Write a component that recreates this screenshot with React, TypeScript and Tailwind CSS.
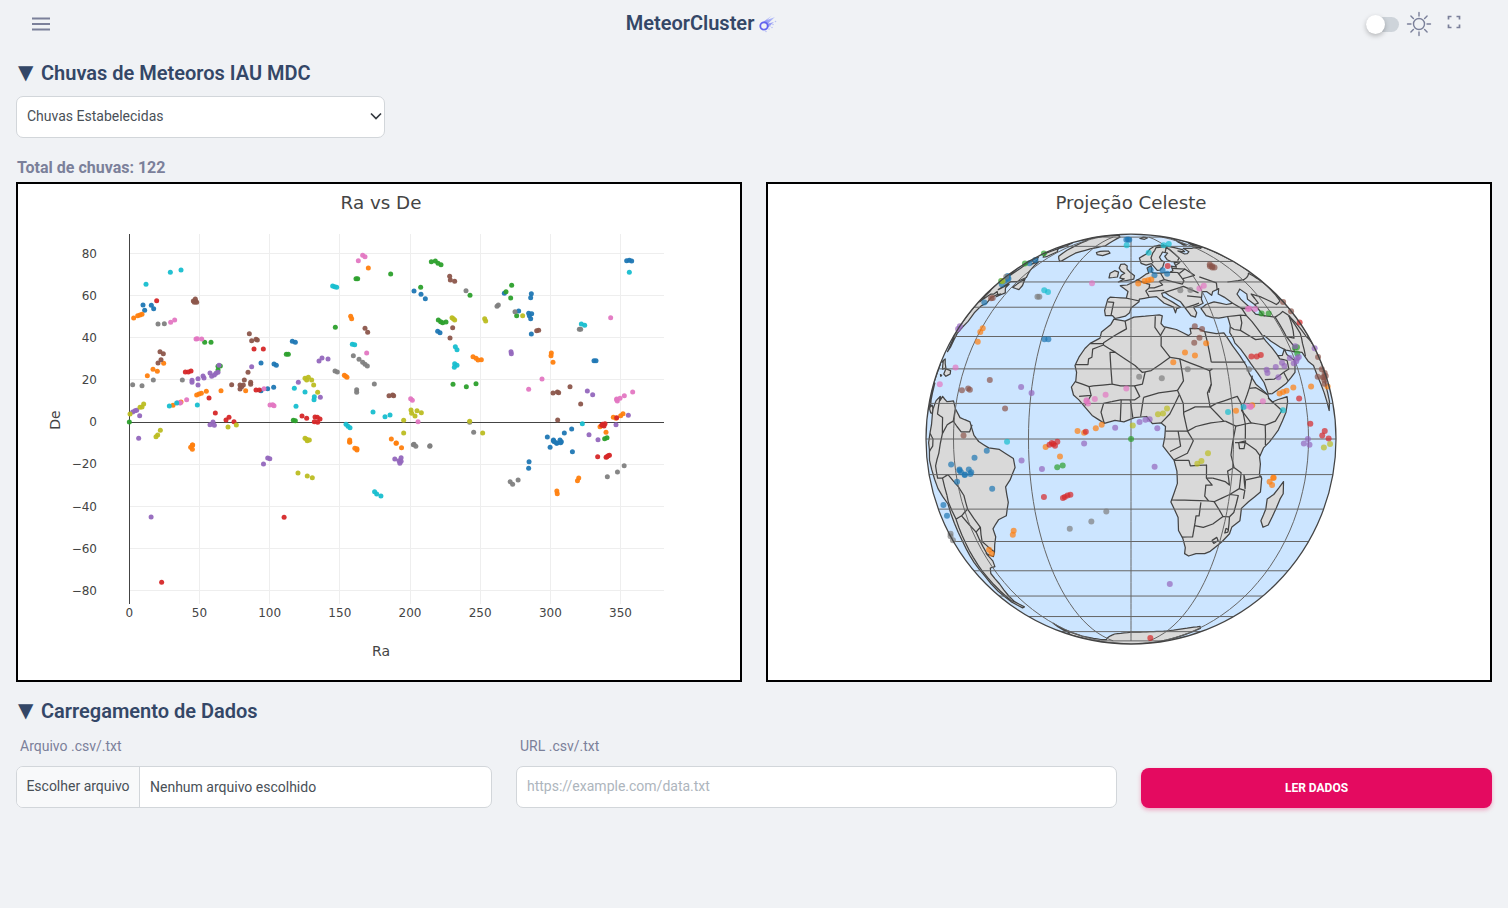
import React from "react";

const COLORS: Record<string, string> = {
  b: "#1f77b4", o: "#ff7f0e", g: "#2ca02c", r: "#d62728", p: "#9467bd",
  n: "#8c564b", k: "#e377c2", y: "#7f7f7f", l: "#bcbd22", c: "#17becf",
};

const P10: Record<string, number[]> = {
  b: [309,240,314,256,334,241,341,251,663,414,702,417,709,421,757,349,766,352,683,491,701,487,663,497],
  o: [281,279,293,272,300,270,306,268,339,433,352,439,322,452,371,415,399,541,423,531,470,510,477,507,484,505,499,499,543,497,617,497,458,660,985,129,932,274,935,281,913,451,917,454,921,457,929,645,929,652],
  g: [268,591,494,352,513,352,534,435,534,424,541,423,739,388,745,388,886,307,948,161,953,161,760,586,766,587],
  r: [350,227,436,441,445,441,453,438,507,519,526,564,558,585,567,577,582,590,642,372,670,372,648,495,658,495,786,573,800,580,825,576,832,577,840,582,823,590,833,592],
  p: [278,561,285,557,290,556,299,572,296,640,456,466,456,472,474,461,489,453,492,459,510,444,515,454,523,450,528,445,534,442,537,421,474,480,510,599,519,591,523,601,635,425,775,472,837,408,846,399,864,402,841,517],
  n: [360,380,370,386,363,404,354,414,467,228,460,228,470,232,466,222,463,232,628,326,635,347,652,345,648,343,624,442,613,465,575,479,600,480,600,492,610,480,605,485,632,472,632,478,975,310,983,322],
  k: [392,292,404,285,468,342,472,341,485,342,413,533,421,533,440,524,672,491,690,540,698,539,702,542,955,107,968,91,975,95,980,384,420,534],
  y: [278,479,306,482,340,465,354,297,373,296,427,465,885,438,892,441,940,392,957,403,968,412,975,418,982,423,950,494,950,502],
  l: [270,567,300,547,306,546,311,537,361,616,353,630,348,635,564,606,589,600,795,460,805,457,800,465,815,465,821,480,833,502,795,640,800,643,808,645],
  c: [318,178,391,142,423,135,388,543,410,534,472,540,763,490,795,501,768,544,823,515,822,524,878,183,884,185,890,187,937,358,944,359,918,598,924,604,930,608],
};
const P11: Record<string, number[]> = {
  b: [132,198,153,208,166,221,203,319,210,323,403,205,446,258,484,206,482,218,476,265,485,266,478,272,482,281,484,327,770,107,778,106,785,108,672,407,678,407,532,636,550,647,560,655,570,645,574,650,583,624,605,612],
  o: [309,395,318,400,324,405,334,404,544,384,543,392,549,412,64,642,79,654,690,605,708,622,730,577,738,580,752,572,759,566],
  g: [184,110,196,108,204,115,213,119,62,147,152,187,300,211,205,285,212,290,218,293,228,291,408,200,425,181,422,219,440,272,249,478,289,485,318,476,704,641,711,638],
  r: [740,578,695,601,700,600,705,596,702,603,698,598],
  p: [423,380,424,386,652,498,668,509,775,571,738,599,657,629,684,644],
  n: [239,154,241,165,254,169,248,308,240,339,57,512,68,510,71,512,500,317,506,316,549,504,562,501,566,503,600,485,632,537,563,585],
  k: [122,521,127,526,144,590,722,278,476,493,516,462,740,524,742,528,750,520,763,512,788,501,740,522],
  y: [13,477,288,197,381,244,385,240,435,260,628,313,632,313,299,592,311,622,132,658,180,662],
  l: [246,278,250,281,254,285,344,281,347,288,458,272,123,555,125,565,135,573,141,557,154,563,101,586,101,624,338,624,299,589],
  c: [9,561,45,575,60,570,256,365,261,374,254,416,261,421,253,427,634,297,644,301,778,142,637,596],
};
const P12: Record<string, number[]> = {
  o: [362,15,358,22,362,28,736,5,748,25,753,30,753,26,846,10,859,23,1280,114,1277,122,1228,153,1229,161],
  p: [264,231,531,72,541,54,546,56,843,57,858,53,853,62,858,64,855,70],
  l: [613,99,635,108,647,113,635,2],
  r: [289,427,580,232,1325,50,1345,52,1350,47,1353,46,1347,50],
  c: [795,155,800,162,810,168],
  y: [887,14,893,19,926,19,1117,125,1123,133,1136,120,1348,110,1372,96,1388,77],
  b: [1162,65,1161,85,1212,22,1265,35,1222,5,1228,9,1237,8,1220,0],
};

type Dot = { x: number; y: number; c: string };
const DOTS: Dot[] = [];
const add = (set: Record<string, number[]>, fx: (n: number) => number, fy: (n: number) => number) => {
  Object.keys(set).forEach((k) => {
    const a = set[k];
    for (let i = 0; i < a.length; i += 2) DOTS.push({ x: fx(a[i]), y: fy(a[i + 1]), c: COLORS[k] });
  });
};
add(P10, (n) => 40 + n / 3, (n) => 225 + n / 3);
add(P11, (n) => 370 + n / 3, (n) => 225 + n / 3);
add(P12, (n) => 40 + n / 2.376, (n) => 440 + n / 3);

const CX = 1131, CY = 439, R = 205;
const proj = (lon: number, lat: number): [number, number] => {
  const lo = Math.max(-90, Math.min(90, lon)) * Math.PI / 180;
  const la = lat * Math.PI / 180;
  return [CX + R * Math.cos(la) * Math.sin(lo), CY - R * Math.sin(la)];
};
type LL = number[];
const toPath = (pts: LL, closed: boolean) => {
  let d = "";
  const n = pts.length / 2;
  const total = closed ? n : n - 1;
  for (let i = 0; i < total; i++) {
    const a = [pts[2 * i], pts[2 * i + 1]];
    const j = (i + 1) % n;
    const b = [pts[2 * j], pts[2 * j + 1]];
    const steps = Math.max(1, Math.ceil(Math.max(Math.abs(a[0] - b[0]), Math.abs(a[1] - b[1])) / 3));
    for (let s = 0; s < steps; s++) {
      const t = s / steps;
      const p = proj(a[0] + (b[0] - a[0]) * t, a[1] + (b[1] - a[1]) * t);
      d += (d ? "L" : "M") + p[0].toFixed(1) + " " + p[1].toFixed(1);
    }
  }
  if (closed) return d + "Z";
  const e = proj(pts[pts.length - 2], pts[pts.length - 1]);
  return d + "L" + e[0].toFixed(1) + " " + e[1].toFixed(1);
};

const LAND: LL[] = [
  [-5.9,35.8,-2,35.1,1,36.5,5,36.8,10,37.3,11,36.9,10.2,34.3,11,33.2,15.2,32.3,19,30.3,20,31,20,32.7,23,32.6,25,31.6,29,30.9,32,31.2,32.6,29.9,33.8,27,35.5,24,37,21,37.5,18.6,39.2,15.5,43.1,12.5,43.3,11.5,44.5,10.4,47,11.1,51.1,11.9,51,10.5,49.7,7.5,46,2.5,42.5,-0.8,40.3,-2.5,39,-5,39.5,-7,39.5,-10,40.5,-11,40.8,-15,37,-17.8,34.9,-19.8,35.4,-23.5,33,-25.4,32.8,-27.5,30.9,-30,27.5,-33.2,25.7,-34,22.5,-34,20,-34.8,18.4,-34,18.2,-32,16.8,-29,15,-26.5,14.4,-22.5,11.8,-17.9,13.4,-12.5,13.1,-9,12.2,-6,9,-2,9.5,0.5,9.7,3.5,8.5,4.5,6,4.3,4.4,6.3,1,6,-2,4.8,-4.5,5.2,-7.5,4.4,-11,6.6,-13.2,9,-15,11,-16.7,12.4,-17.5,14.7,-16.3,16.5,-16.3,19,-17,21,-16,23.7,-14.5,26.2,-13,27.8,-10,29.5,-9.7,31.5,-6.8,34],
  [49.5,-12,50.4,-15.5,49.5,-17,47.5,-24.8,45.5,-25.5,43.7,-23.5,44.4,-20,44,-17,46.3,-15.7],
  [-9,37,-9.5,38.8,-8.9,43,-8,43.8,-1.8,43.4,-1.2,46,-4.5,48.4,-1.6,48.7,1.5,50.2,4,51.5,7,53.5,8.5,54,8.2,56.5,10.5,57.7,10.5,56,9.8,54.7,11,54,14,54,19,54.4,21,55.2,21.5,57.5,24,57,24.3,59.2,29.5,60,23,60,21.3,61,21.3,63,25,65,22,65.8,17.5,62.5,17.5,60.6,18.8,59.7,16.5,57,14.5,55.5,13,55.4,11,58.8,8,58,5.5,59,5,62,10,64.5,14,67.8,19,70,25,71,31,70.3,41,67.5,40,66,35,66.5,37.5,64.5,40,64.7,44,66,44,68.5,54,68.5,60,69,68,68.5,67,71.5,73,73,73,69,73,72,80,73,90,75.5,90,22,86,20,80,15.5,80,10.5,77.5,8,73,18,72.5,21,69,22.3,67,25,61.5,25.2,57,25.7,54.5,26.6,51,28.5,48.8,30.3,47.8,30,48.5,28.5,50.2,26.3,51,25,51.6,24,54,24.1,56.3,26,56.5,24.3,59.8,22.5,57.8,19,52,15.8,45,12.8,43.3,12.7,42.5,16,39,21.5,36.5,26,35,28,34.9,29.5,34.3,31.3,35.5,33.5,36,36.7,32,36.1,29.5,36.3,27.3,37,26.3,39.5,29,41,33,42,38,41,41.5,41.5,39,43.8,37,45,39,47.2,35,46,33.5,44.5,32,46,30,46,28,43,28,41.5,26,40.7,23.5,40,24,38,23,36.5,21.5,37,19.5,41,19,42,15,44.5,13.6,45.7,12.3,45.3,12.5,44,16,41.8,18.4,40,16.8,39.5,16,38,15.7,40,12.5,41.5,10,44,7,43.7,3.2,43,3,42,0,39.7,-0.5,38,-2,36.8,-5.5,36,-6.5,37],
  [-5.5,50,1.2,51.2,1.6,52.8,-0.5,54.4,-2,56,-2,57.6,-3.5,58.6,-5.5,58.4,-6,56.5,-4.8,55,-3,54,-4.5,53,-5,51.7,-3,51.4],
  [-10,51.8,-6.2,52.2,-6,54.5,-8,55.2,-10,54],
  [-24,65.5,-22,64,-18,63.4,-14,65,-16,66.5,-22,66.3],
  [-44,60,-51,63,-53,67,-54,70,-58,75.5,-68,76,-73,78.5,-62,82,-30,83.5,-18,80,-20,75,-22,70.5,-32,68,-40,65,-43,60.5],
  [12,78,20,80,25,79,17,77],
  [52,71,56,74,68,77,60,75,56,71],
  [-90,29.2,-85,29.7,-83,29,-81.5,25.2,-80,26.8,-81.5,31,-76,35,-76,38,-74,40.5,-70,41.5,-70.5,43.5,-67,44.8,-64,45,-66,44,-61,45.5,-65,47.5,-65,49,-71,46.8,-66,50.2,-60,50.2,-56,52,-60,55.5,-64,60,-68,58.5,-70,61,-78,62.5,-78,58,-76.5,56,-79,52,-82,52.8,-85,55.3,-90,57],
  [-64,63,-68,62.5,-78,65,-73,68,-68,70,-78,73,-90,73,-90,71,-80,70,-62,66],
  [-90,76,-80,76,-75,80,-65,83,-90,82],
  [-59,47.7,-53,46.8,-53,48.5,-56,51.5,-59,48],
  [-90,21.3,-87,21.5,-88.2,18,-88.5,16,-84,15.8,-83.5,11,-82,9,-79.5,9.5,-77.5,8.5,-78,7.2,-80,7.3,-83,8.3,-85.7,10,-87.5,13,-90,13.8],
  [-84.5,22,-80,23,-74.2,20.2,-78,19.9,-82,22.5],
  [-74.4,18.5,-74,20,-69,19.5,-68.4,18.5,-71.5,17.8],
  [-78.3,18.3,-76.3,18.1,-77,17.8],
  [-77.5,8.5,-75.5,10.7,-72,12,-71.5,10.8,-70,12,-66,10.5,-61.8,10.7,-60,8.5,-57,6,-52,4.8,-50,1,-48,-0.7,-44,-2.5,-40,-2.9,-35.2,-5.5,-34.8,-8,-37,-11.5,-39,-13.5,-39,-18,-41,-22,-44.7,-23.2,-48.5,-26,-48.7,-28.5,-53,-33.5,-55,-35,-58.4,-34,-57,-36.5,-58,-38.5,-62,-39,-65,-41,-65,-45,-68,-50,-69,-52.5,-65,-55,-69,-55.5,-74,-52.5,-75.5,-48,-73.5,-42,-73.5,-37,-71.5,-30,-70.3,-18.5,-76,-14,-81.2,-6,-80,-3,-81,-1,-78.5,2,-77.3,4,-77.5,7],
  [-60,-64,-62,-68,-60,-74,-45,-78,-35,-78,-25,-75,-15,-72,0,-70.5,10,-70.3,30,-69.5,40,-68,56,-66,62,-67.5,62,-90,-90,-90,-90,-72,-75,-72,-68,-71],
];

const BORDERS: LL[] = [
  [-2,35.1,-1.5,32.5,-5,30.5,-8.7,28,-8.7,27.3],[-13,27.7,-8.7,27.7],[-8.7,27.3,-12,26,-12,23.5,-13,23,-13,21.3,-17,21.3],
  [-8.7,27.3,-4.8,25,-6.5,25,-5.5,15.5,-11,15,-12.2,14.8,-16.3,16.2],[-4.8,25,1.2,21,3.3,19,4.2,19.1,6,19.5,12,23.5,9.5,27,9.8,30,8,33,8.5,36.8],
  [9.5,30.2,11.5,33],[25,31.6,25,22],[25,22,37,22],[12,23.5,15,23,24,19.5,25,20],[24,19.5,24,15.5,22.5,13,23,9,27,5],
  [15,23,15.5,16.5,13.5,13.7,14,12.5],[3.6,11.7,8,13,13.5,13.7],[-5.5,15.5,-3,15,1,15,3.3,15.5,4.2,19.1],
  [-5.5,10.5,-3,11,1,11,2.5,12,1,15],[2.7,6.3,3.6,11.7],[0.5,6,-0.2,11],[-3,5,-2.8,11],[-7.5,4.4,-8.5,7.5,-7.8,10,-5.5,10.5],
  [-12.2,14.8,-11.5,12.3,-15,12],[-11.5,12.3,-13.2,9.4],[8.5,4.5,11,7,14,12.5],[14,12.5,15,10,15,7,16,2.2],[15,7.5,18.5,9,23,9],
  [16,2.2,18.5,3.5,23,4.5,27.5,5],[9.7,2.2,13.3,2.2,16,2.2,17.7,-0.5,16,-4,12.2,-5.8],[13.3,2.2,14,-2,11,-3.5],
  [12.2,-6,16.5,-6,17,-7.5,21.8,-7.3,22,-11,24,-11],[22,-11,24,-13,22,-13,22,-16.2,23.4,-17.6],[11.8,-17.3,18,-17.4,23.4,-17.6],
  [21,-18,21,-22,20,-22,20,-28.5,16.5,-28.6],[20,-25,23,-25.5,26,-24.5,29,-22.2,31.3,-22.3,32,-26.5],[24,-11,28,-12,29.5,-13,28.5,-9,30.5,-8],
  [27.5,5,30.8,3.6,29.7,-1,29.3,-4.5,30.5,-8],[23.4,-17.6,25.2,-17.8,30,-15.7,33,-16,32.5,-21,31.3,-22.3],[25.2,-17.8,29,-22.2],
  [30.5,-8,33,-9.5,33,-14,30,-15.7],[33,-14,35,-14.5,35,-17],[34.9,-11.5,40.4,-10.5],[33.9,-1,37.5,-3,39.2,-4.7],[30.5,-1,33.9,-1],
  [30.8,3.6,34,4.2,33.9,0],[34,4.2,36,4.5,41,3.9,41,-1.7],[41,3.9,45,5,48,8,43,11.5],[23,9,25,10,32,12,33,10,34,4.2],
  [36.5,14.3,34.3,10.5,33,8,36,4.5],[36.5,14.3,39,14.5,43,12.5],[36.5,14.3,38.5,18],[24,15.5,23,13],
  [27,-29.7,28.5,-28.7,29.3,-29.7,28,-30.6,27,-29.7],[31,-25.8,32,-26.3,32,-27,31,-27.3,31,-25.8],
  [31.7,-1,34,-0.5,33.5,-2.7,32,-2.7,31.7,-1],[34,-10,34.8,-12,35,-14,34.4,-12,34,-10],
  [-1.8,43.4,3,42.4],[-8.8,42,-6.5,41.8,-7,37.2],[2.5,51,6,49.5,8,49,7.5,47.5,6,46.2,7,44],[14.2,54,15,51,12.5,50.3,13.5,48.7,9.7,47.5,7.5,47.5],
  [7,46,13.6,46.5],[19,54.4,23,54.3,24,50.5,22.5,49.1,15,51],[13.6,45.7,16.5,46.5,22.5,48.1,28,45.5],[22.5,44.3,28.5,43.7],[20,39.7,26.3,41.5],
  [33,52.3,40,49.6,38,47],[23.5,53.9,28,56,31,53,24,51.5],[21,56.3,28,56],[24.5,58,28,59.5],[24,65.8,29,69.5,30,62,27.5,60.5],
  [12,59,12,62,14.5,65,20,69,29,69.8],[47,50,61,51,77,54,87,49],[53,41,56,41.5,56,45,61,44,70,41,80,42.5,87,49],[54,37,61,36.5,61,31.5],
  [61.5,25,63,27,61,30,61,31.5],[61,36.5,66,37.5,71,38.5,74.5,37],[61,30,66,29.5,71,34,74.5,37],[68.5,23.8,71,27.8,74.5,31,74.5,37],
  [74.5,37,79,32.5,81,30,88,27.8,90,28],[44.5,39.5,44.8,37,46,35,48,30.3],[36,36.7,42,37.2,44.8,37],[41.5,41.5,44.5,39.5,48.5,39.5],
  [42,37.2,41,34.5,39,32,36.5,32.3,35.5,33],[39,32,44,29,48,29.3],[43,16.8,47,17,52,19,55,20,55.5,22.5,52,23,51.6,24],[52,19,53,16.5],
  [-72,12,-72,7,-67.5,6,-67,1.5,-70,-4,-74,-7.5,-74,-11,-69.5,-11,-69,-16],[-60,8.5,-60.5,5,-56,2,-52,2,-51,4],[-67,1.5,-64,4,-60.5,5],
  [-78.5,1.5,-75,0,-75.5,-2,-80,-3.5],[-69.5,-11,-65,-10,-60,-13.5,-58,-16,-58,-20,-54.5,-25.5,-57,-30,-53,-33.5],[-69,-16,-69.5,-18,-68,-23,-70,-33,-71.5,-40,-72,-48,-72,-52,-69,-52.5],
  [-68,-23,-63,-22,-58,-20],[-63,-22,-58,-27,-54.5,-25.5],[-58,-27,-58,-34],
  [-67,45,-70,46,-71,45,-75,45,-79,43.5,-83,42,-83,46,-89,48,-90,49],
];

const Caspian: LL = [47,45,51,47,53,45,51,43,53,41,54,37,50,37.5,49,40,47,43];

const GlobePoints = DOTS.map((d) => {
  const ra = (d.x - 129.3) / 1.4035;
  const de = (422 - d.y) / 2.108;
  const lon = ra > 180 ? ra - 360 : ra;
  return Math.abs(lon) < 90 ? { p: proj(lon, de), c: d.c } : null;
}).filter(Boolean) as { p: [number, number]; c: string }[];

const raTicks = [50, 100, 150, 200, 250, 300, 350];
const deTicks = [80, 60, 40, 20, -20, -40, -60, -80];
const X = (r: number) => 129.3 + 1.4035 * r;
const Y = (d: number) => 422 - 2.108 * d;
const lab = (n: number) => (n < 0 ? "\u2212" + Math.abs(n) : String(n));

function Scatter() {
  return (
    <svg viewBox="18 184 722 496" className="block w-full h-full font-['DejaVu_Sans',sans-serif]">
      <text x="381" y="208.5" textAnchor="middle" fontSize="18.3" fill="#444">Ra vs De</text>
      {raTicks.map((r) => <line key={r} x1={X(r)} x2={X(r)} y1="234" y2="604" stroke="#eee" shapeRendering="crispEdges" />)}
      {deTicks.map((d) => <line key={d} x1="129" x2="664" y1={Y(d)} y2={Y(d)} stroke="#eee" shapeRendering="crispEdges" />)}
      <line x1="129.5" x2="129.5" y1="234" y2="604" stroke="#444" shapeRendering="crispEdges" />
      <line x1="129" x2="664" y1="422.5" y2="422.5" stroke="#444" shapeRendering="crispEdges" />
      {[0, ...raTicks].map((r) => <text key={r} x={X(r)} y="617" textAnchor="middle" fontSize="12" fill="#444">{r}</text>)}
      {[...deTicks, 0].map((d) => <text key={d} x="97" y={Y(d) + 4.3} textAnchor="end" fontSize="12" fill="#444">{lab(d)}</text>)}
      <text x="381" y="656" textAnchor="middle" fontSize="14" fill="#444">Ra</text>
      <text transform="rotate(-90 60 420)" x="60" y="420" textAnchor="middle" fontSize="14" fill="#444">De</text>
      {DOTS.map((d, i) => <circle key={i} cx={d.x} cy={d.y} r="2.5" fill={d.c} fillOpacity="0.95" />)}
    </svg>
  );
}

function Globe() {
  const lats = [-80, -70, -60, -50, -40, -30, -20, -10, 0, 10, 20, 30, 40, 50, 60, 70, 80];
  const lons = [-60, -30, 0, 30, 60];
  return (
    <svg viewBox="768 184 722 496" className="block w-full h-full font-['DejaVu_Sans',sans-serif]">
      <defs>
        <clipPath id="globeClip"><circle cx={CX} cy={CY} r={R} /></clipPath>
      </defs>
      <text x="1131" y="208.5" textAnchor="middle" fontSize="18.2" fill="#444">Projeção Celeste</text>
      <circle cx={CX} cy={CY} r={R} fill="#cce5ff" />
      <g clipPath="url(#globeClip)">
        {LAND.map((p, i) => <path key={i} d={toPath(p, true)} fill="#d9d9d9" stroke="#444" strokeWidth="1.25" strokeLinejoin="round" />)}
        <path d={toPath(Caspian, true)} fill="#cce5ff" stroke="#444" strokeWidth="1.25" />
        {BORDERS.map((p, i) => <path key={i} d={toPath(p, false)} fill="none" stroke="#444" strokeWidth="1.25" strokeLinejoin="round" />)}
        {lats.map((l) => {
          const y = CY - R * Math.sin(l * Math.PI / 180);
          return <line key={l} x1={CX - R} x2={CX + R} y1={y} y2={y} stroke="#666" strokeWidth="1" />;
        })}
        {lons.map((l) => <path key={l} d={toPath([l, -80, l, 80], false)} fill="none" stroke="#666" strokeWidth="1" />)}
      </g>
      {GlobePoints.map((d, i) => <circle key={i} cx={d.p[0]} cy={d.p[1]} r="3" fill={d.c} fillOpacity="0.7" />)}
      <circle cx={CX} cy={CY} r={R} fill="none" stroke="#444" strokeWidth="1.25" />
    </svg>
  );
}

const Section = ({ children }: { children: React.ReactNode }) => (
  <h2 className="flex items-center h-[26px] text-[20px] font-semibold text-[#344767] leading-[26px]">
    <span className="w-[25px] text-[20px] font-['DejaVu_Sans',sans-serif] pl-[2px] pb-[2px]">▼</span>
    {children}
  </h2>
);

export default function App() {
  return (
    <div className="min-h-screen bg-[#f0f2f5] px-4 font-['Roboto',sans-serif] overflow-hidden">
      <header className="relative h-[46px] flex items-center justify-between">
        <svg width="20" height="14" viewBox="0 0 20 14" className="ml-[15px] mt-[2px]" stroke="#7b809a" strokeWidth="2">
          <path d="M1 1.5h18M1 7h18M1 12.5h18" />
        </svg>
        <div className="absolute left-0 right-0 top-0 h-[46px] flex items-center justify-center pr-[104px]">
          <span className="text-[20px] font-semibold text-[#344767]">MeteorCluster</span>
          <svg width="20" height="20" viewBox="0 0 20 20" className="ml-[4px]" fill="none">
            <defs>
              <linearGradient id="tail" x1="0" y1="1" x2="1" y2="0">
                <stop offset="0" stopColor="#5d5df0" />
                <stop offset="1" stopColor="#b9c6fa" />
              </linearGradient>
            </defs>
            <path d="M3 10.5 14 2.5 9 7 17 4 10 10.5 16 9 9.5 15Z" fill="url(#tail)" opacity="0.85" />
            <circle cx="6" cy="13" r="3.7" fill="#f0f2f5" stroke="#6262ee" strokeWidth="1.8" />
            <path d="M12 13h.01M15 11.5h.01M11 16h.01M14 14.5h.01M8 18.5h.01M6 17.5h.01M17.5 8.5h.01" stroke="#b9c2f5" strokeWidth="1.6" strokeLinecap="round" />
          </svg>
        </div>
        <div className="flex items-center mr-[31px] mt-[2px]">
          <div className="relative w-[33px] h-[15px] rounded-full bg-[#ced4da] mr-[7px]">
            <div className="absolute left-0 top-[-2px] w-[19px] h-[19px] rounded-full bg-white shadow-[0_2px_5px_rgba(0,0,0,0.25)]" />
          </div>
          <svg width="26" height="26" viewBox="0 0 26 26" fill="none" stroke="#7b809a" strokeWidth="1.4" strokeLinecap="round" className="mr-[15px]">
            <circle cx="13" cy="13" r="5.5" />
            <path d="M13 1.5v3.5M13 21v3.5M1.5 13H5M21 13h3.5M4.9 4.9l2.5 2.5M18.6 18.6l2.5 2.5M4.9 21.1l2.5-2.5M18.6 7.4l2.5-2.5" />
          </svg>
          <svg width="14" height="14" viewBox="0 0 14 14" fill="none" stroke="#7b809a" strokeWidth="1.7" className="mt-[-4px]">
            <path d="M1.5 4.5V1.5h3M9.5 1.5h3v3M12.5 9.5v3h-3M4.5 12.5h-3v-3" />
          </svg>
        </div>
      </header>

      <div className="mt-[14px]"><Section>Chuvas de Meteoros IAU MDC</Section></div>

      <div className="relative w-[369px] h-[42px] mt-[10px]">
        <select className="w-full h-full appearance-none bg-white border border-[#d2d6da] rounded-[7px] pl-[10px] pr-6 pb-[2px] text-[14px] text-[#495057] outline-none">
          <option>Chuvas Estabelecidas</option>
        </select>
        <svg width="12" height="9" viewBox="0 0 12 9" fill="none" stroke="#343a40" strokeWidth="1.7" className="absolute right-[3px] top-[16px]">
          <path d="M1 1.5 6 6.5 11 1.5" />
        </svg>
      </div>

      <div className="mt-[19px] ml-[1px] h-[22px] leading-[22px] text-[16px] font-bold text-[#7b809a]">Total de chuvas: 122</div>

      <div className="mt-[3px] grid grid-cols-[726px_726px] gap-[24px]">
        <div className="h-[500px] border-2 border-black bg-white"><Scatter /></div>
        <div className="h-[500px] border-2 border-black bg-white"><Globe /></div>
      </div>

      <div className="mt-[16px]"><Section>Carregamento de Dados</Section></div>

      <div className="mt-[12px] grid grid-cols-[476px_601px_351px] gap-[24px]">
        <div>
          <div className="h-[20px] leading-[20px] ml-[4px] text-[14px] text-[#7b809a]">Arquivo .csv/.txt</div>
          <div className="mt-[10px] h-[42px] flex bg-white border border-[#d2d6da] rounded-[7px] overflow-hidden text-[14px] text-[#495057]">
            <div className="w-[123px] bg-[#f8f9fa] border-r border-[#d2d6da] flex items-center justify-center whitespace-nowrap pb-[2px]">Escolher arquivo</div>
            <div className="flex-1 pl-[10px] flex items-center">Nenhum arquivo escolhido</div>
          </div>
        </div>
        <div>
          <div className="h-[20px] leading-[20px] ml-[4px] text-[14px] text-[#7b809a]">URL .csv/.txt</div>
          <input
            className="mt-[10px] block w-full h-[42px] bg-white border border-[#d2d6da] rounded-[7px] pl-[10px] pb-[2px] text-[14px] placeholder:text-[#adb5bd] outline-none"
            placeholder="https://example.com/data.txt"
          />
        </div>
        <div className="pt-[32px]">
          <button className="w-full h-[40px] rounded-[8px] bg-[#e40a60] text-white text-[12px] font-bold shadow-[0_2px_4px_rgba(233,30,99,0.35)]">LER DADOS</button>
        </div>
      </div>
    </div>
  );
}
